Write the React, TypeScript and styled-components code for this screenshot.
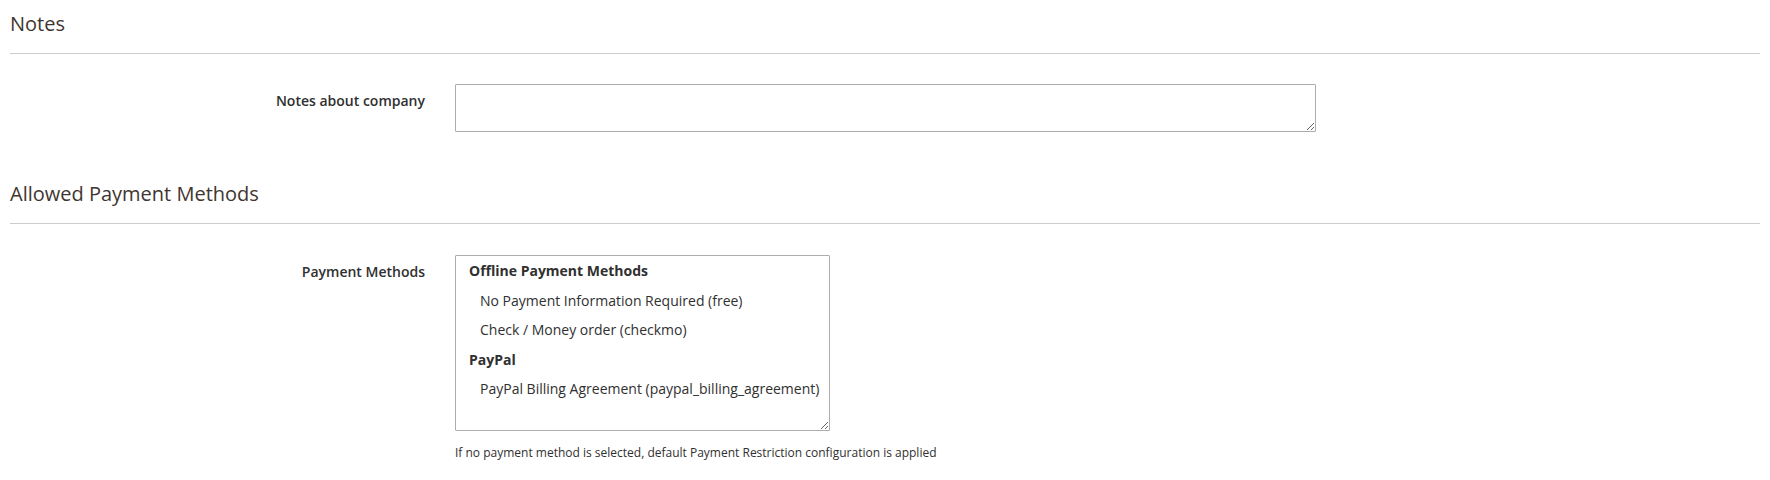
import React from "react";
import styled, { createGlobalStyle } from "styled-components";

interface PaymentGroup {
  title: string;
  methods: string[];
}

const paymentGroups: PaymentGroup[] = [
  {
    title: "Offline Payment Methods",
    methods: ["No Payment Information Required (free)", "Check / Money order (checkmo)"],
  },
  {
    title: "PayPal",
    methods: ["PayPal Billing Agreement (paypal_billing_agreement)"],
  },
];

const GlobalStyle = createGlobalStyle`
  body {
    margin: 0;
    background: #ffffff;
    font-family: "Open Sans", "Liberation Sans", sans-serif;
    color: #303030;
  }
`;

const Page = styled.div`
  padding: 0 10px 40px;
`;

const Section = styled.section`
  display: flex;
  flex-direction: column;
`;

const SectionTitle = styled.h2<{ $gap: number }>`
  margin: ${(p) => p.$gap}px 0 0;
  padding: 0 0 16px;
  border-bottom: 1px solid #cccccc;
  font-size: 20px;
  line-height: 27px;
  font-weight: 400;
  color: #41362f;
`;

const Field = styled.div<{ $gap: number }>`
  display: grid;
  grid-template-columns: 445px auto;
  align-items: start;
  margin-top: ${(p) => p.$gap}px;
`;

const Label = styled.label`
  padding: 7px 30px 0 0;
  text-align: right;
  font-size: 14px;
  line-height: 19px;
  font-weight: 600;
  color: #303030;
`;

const Control = styled.div`
  display: flex;
  flex-direction: column;
  align-items: flex-start;
`;

const TextArea = styled.textarea`
  box-sizing: border-box;
  width: 861px;
  height: 48px;
  margin: 0;
  padding: 6px 10px;
  border: 1px solid #adadad;
  border-radius: 1px;
  font-family: inherit;
  font-size: 14px;
  line-height: 19px;
  color: #303030;
  resize: vertical;
  outline: none;
`;

const MultiSelect = styled.div`
  box-sizing: border-box;
  width: 375px;
  height: 176px;
  border: 1px solid #adadad;
  border-radius: 1px;
  overflow: auto;
  resize: vertical;
  background: #ffffff;
`;

const Row = styled.div<{ $group?: boolean }>`
  padding: 5px 10px 5px ${(p) => (p.$group ? 13 : 24)}px;
  font-size: 14px;
  line-height: 19.5px;
  font-weight: ${(p) => (p.$group ? 700 : 400)};
  color: #303030;
  white-space: nowrap;
  cursor: default;
`;

const Note = styled.div`
  margin-top: 14px;
  font-size: 12px;
  line-height: 16px;
  color: #303030;
`;

const App: React.FC = () => {
  return (
    <Page>
      <GlobalStyle />
      <Section>
        <SectionTitle $gap={10}>Notes</SectionTitle>
        <Field $gap={30}>
          <Label htmlFor="company-notes">Notes about company</Label>
          <Control>
            <TextArea id="company-notes" />
          </Control>
        </Field>
      </Section>
      <Section>
        <SectionTitle $gap={48}>Allowed Payment Methods</SectionTitle>
        <Field $gap={31}>
          <Label>Payment Methods</Label>
          <Control>
            <MultiSelect>
              {paymentGroups.map((group) => (
                <React.Fragment key={group.title}>
                  <Row $group>{group.title}</Row>
                  {group.methods.map((method) => (
                    <Row key={method}>{method}</Row>
                  ))}
                </React.Fragment>
              ))}
            </MultiSelect>
            <Note>If no payment method is selected, default Payment Restriction configuration is applied</Note>
          </Control>
        </Field>
      </Section>
    </Page>
  );
};

export default App;
